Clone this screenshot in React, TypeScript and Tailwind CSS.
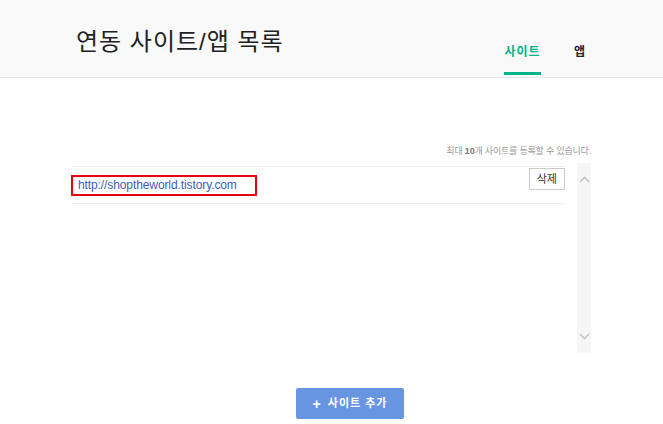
const font = "font-['Liberation_Sans','Noto_Sans_CJK_KR',sans-serif]";

export default function App() {
  return (
    <div className={`w-[663px] h-[424px] bg-white overflow-hidden ${font}`}>
      {/* Header */}
      <header className="h-[78px] bg-[#f9f9f9] border-b border-[#e6e6e6]">
        <div className="flex items-start justify-between pl-[76px] pr-[78px]">
          <h1 className="mt-[27px] text-[24px] leading-[30px] text-[#222] tracking-[1px]">연동 사이트/앱 목록</h1>
          <nav className="flex gap-[33px] mt-[43px] text-[12px] font-bold">
            <div className="flex flex-col items-center">
              <span className="leading-[18px] text-[#00b386] tracking-[1px]">사이트</span>
              <span className="mt-[11px] h-[3px] w-[37px] bg-[#00b386]" />
            </div>
            <span className="leading-[18px] text-[#222]">앱</span>
          </nav>
        </div>
      </header>

      <main className="pl-[72px] pr-[72px]">
        <p className="mt-[66px] text-right text-[9px] leading-[14px] text-[#999] tracking-[-0.2px]">
          최대 <b className="text-[#777]">10</b>개 사이트를 등록할 수 있습니다.
        </p>

        <div className="mt-[8px] flex gap-[12px]">
          <div className="flex-1 h-[186px]">
            <div className="border-t border-b border-[#ececec] h-[38px] flex items-center justify-between">
              <a className="ml-[-1px] border-2 border-[#e60012] px-[5px] h-[21px] w-[186px] flex items-center text-[12px] text-[#3b5eb5] tracking-[-0.1px]">
                http://shoptheworld.tistory.com
              </a>
              <button className="self-start mt-[1px] h-[22px] px-[7px] border border-[#ccc] bg-white text-[11px] text-[#333]">
                삭제
              </button>
            </div>
          </div>
          <div className="w-[14px] h-[190px] mt-[-3px] bg-[#f6f6f6] flex flex-col items-center justify-between py-[13px]">
            <svg width="11" height="7" viewBox="0 0 11 7">
              <path d="M1 6 L5.5 1.5 L10 6" fill="none" stroke="#c4c4c4" strokeWidth="1.6" />
            </svg>
            <svg width="11" height="7" viewBox="0 0 11 7">
              <path d="M1 1 L5.5 5.5 L10 1" fill="none" stroke="#c4c4c4" strokeWidth="1.6" />
            </svg>
          </div>
        </div>

        <div className="mt-[35px] flex">
          <button className="ml-[224px] w-[108px] h-[31px] rounded-[2px] bg-[#6895e2] text-white text-[11px] font-bold flex items-center justify-center gap-[6px] tracking-[1px]">
            <span className="text-[14px] font-bold leading-none">+</span>
            사이트 추가
          </button>
        </div>
      </main>
    </div>
  );
}
